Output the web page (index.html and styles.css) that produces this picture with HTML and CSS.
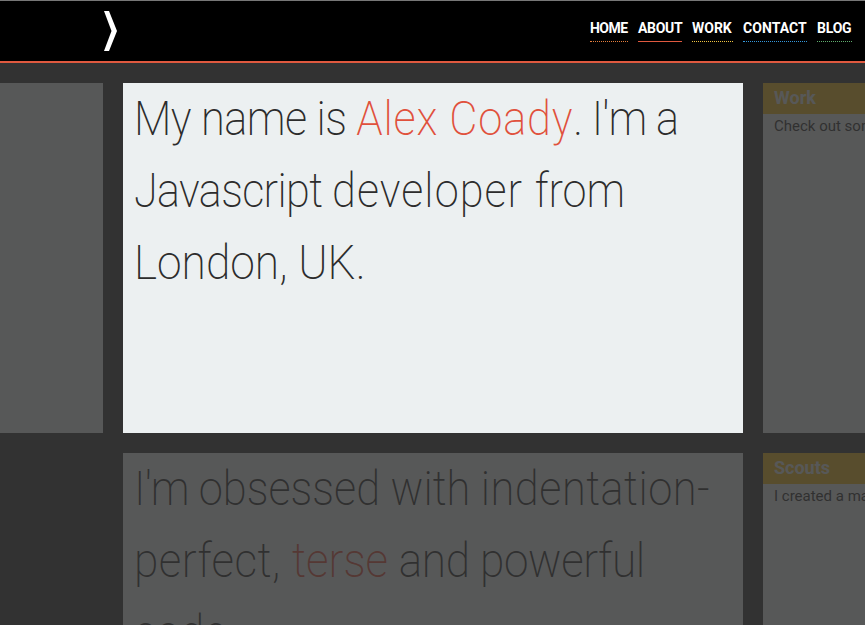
FILE: index.html
```html
<!DOCTYPE html>
<html lang="en">
<head>
<meta charset="utf-8">
<title>Alex Coady</title>
<link rel="stylesheet" href="styles.css">
</head>
<body>
<header class="header">
  <svg class="logo" width="14" height="40" viewBox="0 0 14 40"><path d="M0 0H5L13 20L5 40H0L7.5 20Z" fill="#fff"/></svg>
  <nav class="nav">
    <a class="home">HOME</a>
    <a class="about">ABOUT</a>
    <a class="work">WORK</a>
    <a class="contact">CONTACT</a>
    <a class="blog">BLOG</a>
  </nav>
</header>
<main class="grid">
  <section class="card dim"></section>
  <section class="card intro">
    <p><span class="line l1"><span class="lead">My name is </span><em>Alex Coady</em><span class="tail">. I'm a</span></span> <span class="line l2"><span class="tight">Javascript </span><span class="wide">developer </span>from</span> <span class="line l3">London, UK.</span></p>
  </section>
  <section class="card dim"><h2>Work</h2><p class="copy">Check out some of my work</p></section>
  <div></div>
  <section class="card intro dim">
    <p><span class="line l4"><span class="start">I'm </span>obsessed with <span class="end">indentation-</span></span><span class="line l5"><span class="first">perfect, </span><em>terse</em> <span class="last">and powerful</span></span> <span class="line l6">code.</span></p>
  </section>
  <section class="card dim"><h2>Scouts</h2><p class="copy">I created a map for the Scouts</p></section>
</main>
</body>
</html>
```
FILE: styles.css
```css
* { box-sizing: border-box; }
html, body { height: 100%; }
body {
  margin: 0;
  overflow: hidden;
  background: #323232;
  color: #2c2c2c;
  font-family: Roboto, "Liberation Sans", sans-serif;
}
.header {
  height: 63px;
  display: flex;
  justify-content: space-between;
  align-items: flex-start;
  padding: 10px 13px 0 104px;
  background: #000;
  border-top: 1px solid #777;
  border-bottom: 2px solid #e0593f;
}
.nav { display: flex; gap: 10px; padding-top: 7px; }
.nav a {
  height: 24px;
  line-height: 21px;
  color: #fff;
  font-size: 14px;
  font-weight: 700;
  white-space: nowrap;
  border-bottom: 1px dotted;
}
.nav .home { width: 38px; letter-spacing: -.55px; border-color: #e67e3c; }
.nav .about { width: 44px; letter-spacing: -.3px; border-bottom: 1px solid #e0593f; }
.nav .work { width: 41px; letter-spacing: 0; border-color: #f1c440; }
.nav .contact { width: 64px; letter-spacing: .05px; border-color: #3498db; }
.nav .blog { width: 35px; letter-spacing: -.2px; border-color: #5fae6e; }
.grid {
  display: grid;
  grid-template-columns: 103px 620px 102px;
  grid-template-rows: 350px 350px;
  gap: 20px;
  height: 562px;
  padding-top: 20px;
  overflow: hidden;
}
.card { background: #ecf0f1; overflow: hidden; }
.dim { opacity: .2; }
.intro { padding: 0 10px 0 11px; }
.intro p { margin: 0; font-size: 48px; line-height: 72px; font-weight: 200; white-space: nowrap; }
.line { display: block; width: max-content; transform: scaleX(.905); transform-origin: left; }
.lead { letter-spacing: -.6px; }
.l1 em { letter-spacing: .85px; }
.tail { letter-spacing: -.9px; }
.l2 { transform: scaleX(.9); }
.tight { letter-spacing: -.7px; }
.wide { letter-spacing: 1.2px; }
.l3 { transform: scaleX(.923); }
.start { letter-spacing: -.8px; }
.end { letter-spacing: .55px; }
.l5 { transform: scaleX(.921); }
.first { letter-spacing: .5px; }
.last { letter-spacing: -.4px; }
.intro em { font-style: normal; color: #e0513c; }
.card h2 {
  margin: 0;
  height: 31px;
  padding-left: 11px;
  background: #f1b81c;
  color: #ecf0f1;
  font-size: 18px;
  line-height: 30px;
}
.copy { margin: 0; padding-left: 11px; font-size: 15px; line-height: 24px; white-space: nowrap; }
```
